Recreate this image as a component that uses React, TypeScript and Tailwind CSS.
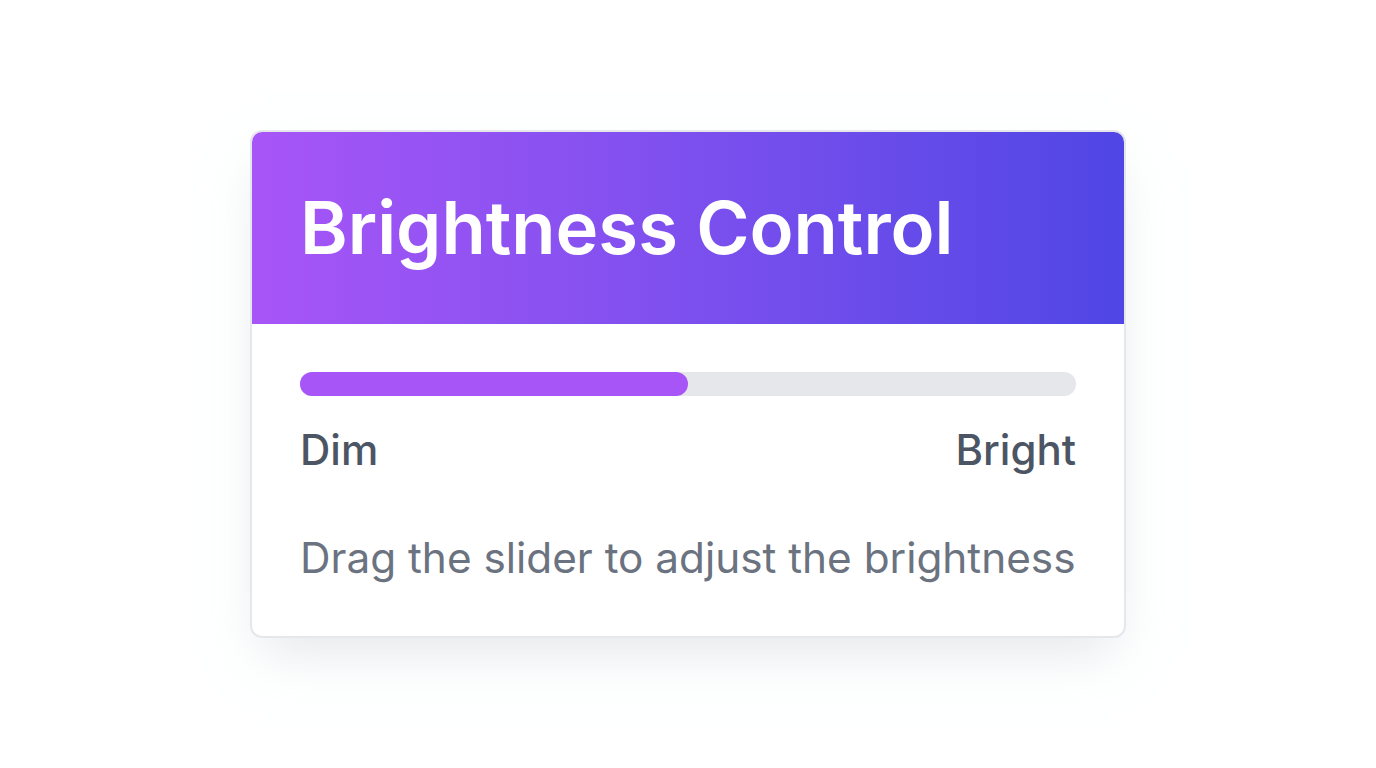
import React from "react";

const App = () => {
  const value = 50;
  return (
    <div
      className="min-h-screen w-full bg-white flex items-center justify-center"
      style={{ fontFamily: "Inter, 'Noto Sans', sans-serif" }}
    >
      <div className="w-[876px] rounded-xl border-2 border-[#e5e7eb] bg-white shadow-2xl shadow-gray-300/60 overflow-hidden">
        <div className="bg-gradient-to-r from-[#a855f7] to-[#4f46e5] px-12 py-12">
          <h1 className="text-[72.4px] leading-[96px] font-semibold text-white">
            Brightness Control
          </h1>
        </div>
        <div className="px-12 pt-12 pb-12">
          <div className="h-6 w-full rounded-full bg-[#e5e7eb]">
            <div
              className="h-6 rounded-full bg-[#a855f7]"
              style={{ width: `${value}%` }}
            />
          </div>
          <div className="mt-6 flex justify-between text-[42px] leading-[60px] font-medium text-[#4b5563]">
            <span>Dim</span>
            <span>Bright</span>
          </div>
          <p className="mt-12 text-[42.3px] leading-[60px] text-[#6b7280]">
            Drag the slider to adjust the brightness
          </p>
        </div>
      </div>
    </div>
  );
};

export default App;
